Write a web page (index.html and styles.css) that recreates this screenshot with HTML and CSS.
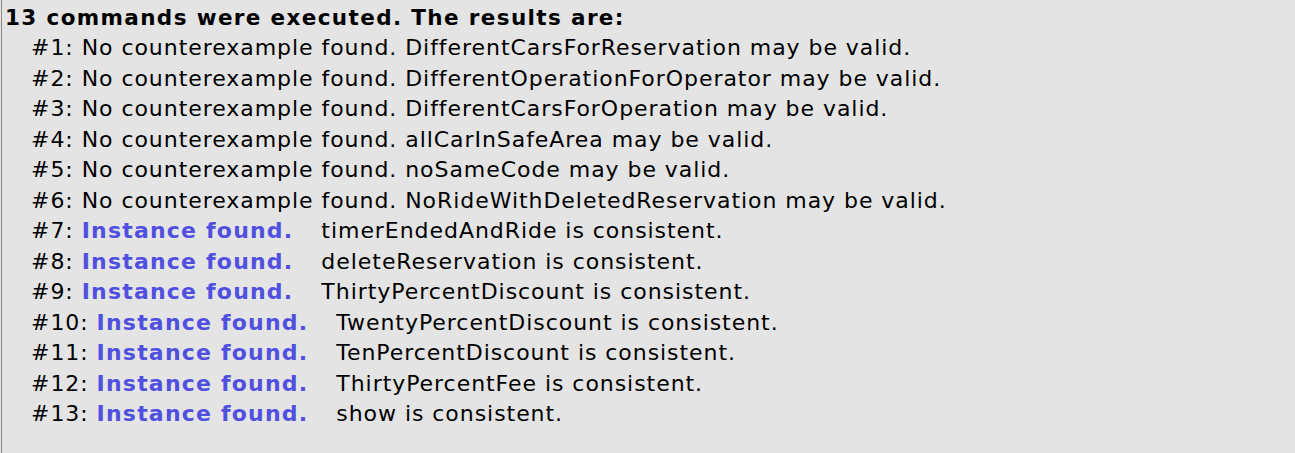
FILE: index.html
```html
<!DOCTYPE html>
<html>
<head>
<meta charset="utf-8">
<link rel="stylesheet" href="styles.css">
</head>
<body>
<div class="panel">
  <div class="title">13 commands were executed. The results are:</div>
  <div class="results">
    <div class="line"><span class="num">#1:</span> No counterexample found. DifferentCarsForReservation may be valid.</div>
    <div class="line"><span class="num">#2:</span> No counterexample found. DifferentOperationForOperator may be valid.</div>
    <div class="line"><span class="num">#3:</span> No counterexample found. DifferentCarsForOperation may be valid.</div>
    <div class="line"><span class="num">#4:</span> No counterexample found. allCarInSafeArea may be valid.</div>
    <div class="line"><span class="num">#5:</span> No counterexample found. noSameCode may be valid.</div>
    <div class="line"><span class="num">#6:</span> No counterexample found. NoRideWithDeletedReservation may be valid.</div>
    <div class="line"><span class="num">#7:</span> <span class="found">Instance found.</span><span class="gap"></span>timerEndedAndRide is consistent.</div>
    <div class="line"><span class="num">#8:</span> <span class="found">Instance found.</span><span class="gap"></span>deleteReservation is consistent.</div>
    <div class="line"><span class="num">#9:</span> <span class="found">Instance found.</span><span class="gap"></span>ThirtyPercentDiscount is consistent.</div>
    <div class="line"><span class="num">#10:</span> <span class="found">Instance found.</span><span class="gap"></span>TwentyPercentDiscount is consistent.</div>
    <div class="line"><span class="num">#11:</span> <span class="found">Instance found.</span><span class="gap"></span>TenPercentDiscount is consistent.</div>
    <div class="line"><span class="num">#12:</span> <span class="found">Instance found.</span><span class="gap"></span>ThirtyPercentFee is consistent.</div>
    <div class="line"><span class="num">#13:</span> <span class="found">Instance found.</span><span class="gap"></span>show is consistent.</div>
  </div>
</div>
</body>
</html>
```

FILE: styles.css
```css
html, body {
  margin: 0;
  padding: 0;
  background: #e4e4e4;
}
.panel {
  box-sizing: border-box;
  width: 1295px;
  height: 453px;
  margin-left: 1px;
  border-left: 1px solid #8a8a8a;
  background: #e4e4e4;
  padding: 4px 0 0 3px;
  font-family: "DejaVu Sans", Verdana, sans-serif;
  color: #000;
}
.title {
  font-weight: bold;
  font-size: 21.5px;
  line-height: 27px;
  letter-spacing: 1.37px;
}
.results {
  margin-top: 2px;
  padding-left: 26px;
}
.line {
  font-size: 22px;
  line-height: 30.5px;
  white-space: pre;
  letter-spacing: 0.95px;
}
.found {
  color: #5050e0;
  font-weight: bold;
  letter-spacing: 1.2px;
}
.gap {
  display: inline-block;
  width: 28px;
}
```
